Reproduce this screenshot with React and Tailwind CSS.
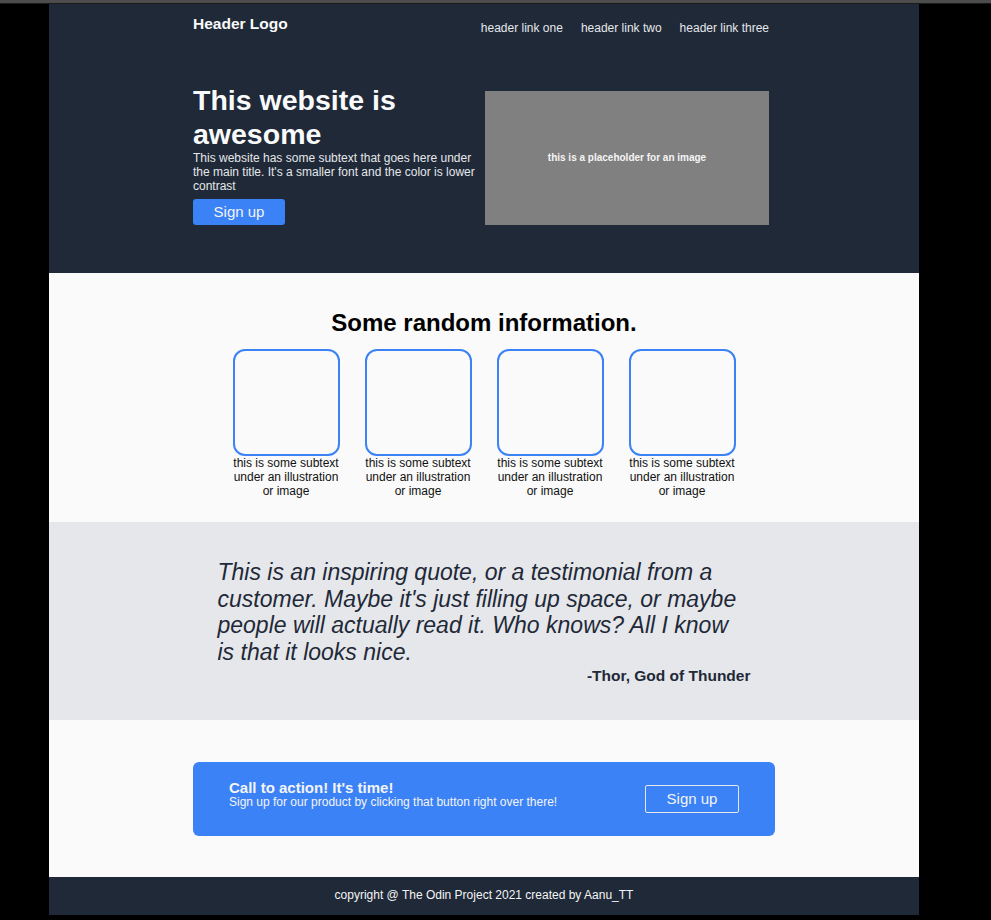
import React from 'react'

const links = ['header link one', 'header link two', 'header link three']
const cards = [1, 2, 3, 4]

function App() {
  return (
    <div className="min-h-[920px] bg-black font-['Liberation_Sans',Arial,sans-serif] leading-[1.15]">
      <div className="h-[3px] bg-[#4d4d4d]" />
      <div className="h-[1px] bg-[#1a1a1a]" />

      <div className="ml-[49px] w-[870px]">
        {/* header + hero */}
        <header className="bg-[#1f2937] pt-[11.5px] pb-[48px]">
          <div className="ml-[144px] w-[576px]">
            <nav className="flex justify-between items-start">
              <div className="text-[15.5px] leading-[16px] font-bold text-[#f9fafb]">Header Logo</div>
              <ul className="flex gap-[18px] mt-[6px] text-[12px] leading-none text-[#e5e7eb]">
                {links.map((l) => (
                  <li key={l}>{l}</li>
                ))}
              </ul>
            </nav>

            <div className="flex items-end gap-[5px] mt-[49px]">
              <div className="w-[287px] flex flex-col items-start">
                <h1 className="text-[28.5px] leading-[34px] font-bold text-[#f9fafb]">This website is awesome</h1>
                <p className="text-[12px] text-[#e5e7eb] mt-[1.5px]">
                  This website has some subtext that goes here under the main title. It's a smaller font and the color is lower contrast
                </p>
                <button className="mt-[5.5px] w-[92px] h-[26px] rounded-[3px] bg-[#3b82f6] text-[15px] text-[#f3f4f6]">
                  Sign up
                </button>
              </div>
              <div className="w-[284px] h-[134px] bg-[#808080] flex items-center justify-center text-[10px] font-bold text-[#f5f5f5]">
                this is a placeholder for an image
              </div>
            </div>
          </div>
        </header>

        {/* info */}
        <section className="bg-[#f9faf9] pt-[36.5px] pb-[24.5px] flex flex-col items-center">
          <h2 className="text-[24px] font-bold text-black">Some random information.</h2>
          <div className="flex gap-[25px] mt-[12px]">
            {cards.map((c) => (
              <div key={c} className="w-[107px] flex flex-col items-center">
                <div className="w-[107px] h-[107px] rounded-[12px] border-2 border-[#3b82f6]" />
                <p className="text-[12px] leading-[14px] text-center text-[#111]">
                  this is some subtext under an illustration or image
                </p>
              </div>
            ))}
          </div>
        </section>

        {/* quote */}
        <section className="bg-[#e5e7eb] pt-[37px] pb-[35px]">
          <div className="w-[533px] mx-auto text-[#1f2937]">
            <p className="text-[23px] italic">
              This is an inspiring quote, or a testimonial from a customer. Maybe it's just filling up space, or maybe people will actually read it. Who knows? All I know is that it looks nice.
            </p>
            <p className="mt-[2px] text-right text-[15.5px] font-bold">-Thor, God of Thunder</p>
          </div>
        </section>

        {/* call to action */}
        <section className="bg-[#f9faf9] pt-[42px] pb-[41px]">
          <div className="w-[582px] h-[74px] mx-auto rounded-[6px] bg-[#3b82f6] flex items-center justify-between px-[36px] text-[#f3f4f6]">
            <div className="mb-[9px]">
              <div className="text-[15px] font-bold">Call to action! It's time!</div>
              <div className="text-[12px]">Sign up for our product by clicking that button right over there!</div>
            </div>
            <button className="w-[94px] h-[28px] border border-[#e5e7eb] rounded-[2px] text-[15px]">Sign up</button>
          </div>
        </section>

        <footer className="h-[38px] bg-[#1f2937] flex items-center justify-center text-[12px] text-[#f3f4f6]">
          copyright @ The Odin Project 2021 created by Aanu_TT
        </footer>
      </div>
    </div>
  )
}

export default App
